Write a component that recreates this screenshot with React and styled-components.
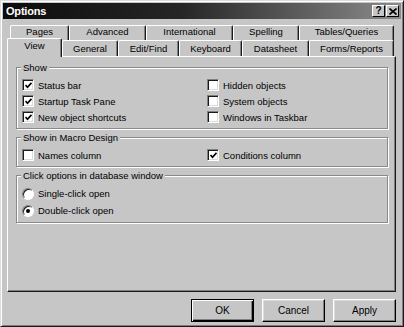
import React from 'react';
import styled, { createGlobalStyle } from 'styled-components';

const GlobalStyle = createGlobalStyle`
  html, body {
    margin: 0;
    padding: 0;
    background: #c6c6c6;
  }
  * {
    box-sizing: border-box;
  }
`;

const backTabs = [
  { label: 'Pages', width: 59 },
  { label: 'Advanced', width: 77 },
  { label: 'International', width: 87 },
  { label: 'Spelling', width: 66 },
  { label: 'Tables/Queries', width: 95 },
];

const frontTabs = [
  { label: 'View', width: 55, active: true },
  { label: 'General', width: 56 },
  { label: 'Edit/Find', width: 61 },
  { label: 'Keyboard', width: 63 },
  { label: 'Datasheet', width: 67 },
  { label: 'Forms/Reports', width: 85 },
];

const Check = () => (
  <svg width="7" height="7" viewBox="0 0 7 7">
    <path d="M0.5 3 L2.5 5.2 L6.5 0.8" stroke="#000" strokeWidth="1.7" fill="none" />
  </svg>
);

const CheckOption = ({ checked, children }) => (
  <Option>
    <Box>{checked && <Check />}</Box>
    <span>{children}</span>
  </Option>
);

const RadioOption = ({ checked, children }) => (
  <Option $tall>
    <Radio>{checked && <Dot />}</Radio>
    <span>{children}</span>
  </Option>
);

export default function App() {
  return (
    <>
      <GlobalStyle />
      <Window>
        <TitleBar>
          <Title>Options</Title>
          <TitleButtons>
            <TitleButton>?</TitleButton>
            <TitleButton>
              <svg width="8" height="7" viewBox="0 0 8 7">
                <path d="M0.5 0.5 L7.5 6.5 M7.5 0.5 L0.5 6.5" stroke="#000" strokeWidth="1.6" />
              </svg>
            </TitleButton>
          </TitleButtons>
        </TitleBar>

        <Body>
          <TabRow $offset={3}>
            {backTabs.map((t) => (
              <Tab key={t.label} $width={t.width} $back>{t.label}</Tab>
            ))}
          </TabRow>
          <FrontRow>
            {frontTabs.map((t) => (
              <Tab key={t.label} $width={t.width} $active={t.active}>{t.label}</Tab>
            ))}
          </FrontRow>

          <Panel>
            <Group>
              <Legend>Show</Legend>
              <Columns>
                <CheckOption checked>Status bar</CheckOption>
                <CheckOption>Hidden objects</CheckOption>
                <CheckOption checked>Startup Task Pane</CheckOption>
                <CheckOption>System objects</CheckOption>
                <CheckOption checked>New object shortcuts</CheckOption>
                <CheckOption>Windows in Taskbar</CheckOption>
              </Columns>
            </Group>

            <Group>
              <Legend>Show in Macro Design</Legend>
              <Columns>
                <CheckOption>Names column</CheckOption>
                <CheckOption checked>Conditions column</CheckOption>
              </Columns>
            </Group>

            <Group>
              <Legend>Click options in database window</Legend>
              <RadioOption>Single-click open</RadioOption>
              <RadioOption checked>Double-click open</RadioOption>
            </Group>
          </Panel>

          <ButtonBar>
            <Button $default>OK</Button>
            <Button>Cancel</Button>
            <Button>Apply</Button>
          </ButtonBar>
        </Body>
      </Window>
    </>
  );
}

// STYLES --------------------------------

const Window = styled.div`
  width: 404px;
  height: 327px;
  background: #c6c6c6;
  border: 1px solid;
  border-color: #dcdcdc #1a1a1a #1a1a1a #dcdcdc;
  box-shadow: inset 1px 1px 0 #fff, inset -1px -1px 0 #7e7e7e;
  padding: 2px;
  font-family: 'Liberation Sans', Arial, sans-serif;
  font-size: 9.5px;
  color: #000;
  display: flex;
  flex-direction: column;
`;

const TitleBar = styled.div`
  height: 16px;
  display: flex;
  align-items: center;
  justify-content: space-between;
  padding: 0 2px 0 3px;
  background: linear-gradient(90deg, #0c0c0c 0%, #262626 45%, #8c8c8c 100%);
`;

const Title = styled.span`
  color: #fff;
  font-weight: bold;
  font-size: 11px;
  letter-spacing: -0.2px;
`;

const TitleButtons = styled.div`
  display: flex;
  gap: 1px;
`;

const TitleButton = styled.div`
  width: 13px;
  height: 12px;
  background: #c6c6c6;
  border: 1px solid;
  border-color: #fff #000 #000 #fff;
  display: flex;
  align-items: center;
  justify-content: center;
  font-weight: bold;
  font-size: 10px;
  line-height: 1;
`;

const Body = styled.div`
  flex: 1;
  display: flex;
  flex-direction: column;
  padding: 6px 5px 0 4px;
`;

const TabRow = styled.div`
  display: flex;
  height: 15px;
  margin-left: ${(p) => p.$offset || 0}px;
`;

const FrontRow = styled.div`
  display: flex;
  align-items: flex-end;
  height: 18px;
  margin-top: -2px;
  position: relative;
  z-index: 2;
`;

const Tab = styled.div`
  width: ${(p) => p.$width}px;
  height: ${(p) => (p.$active ? 19 : 16)}px;
  margin-bottom: ${(p) => (p.$active ? -1 : 0)}px;
  background: #c6c6c6;
  border-top: 1px solid #fff;
  border-left: 1px solid #fff;
  border-right: 1px solid #1a1a1a;
  border-top-left-radius: 2px;
  border-top-right-radius: 2px;
  box-shadow: inset -1px 0 0 #808080;
  display: flex;
  justify-content: center;
  padding-top: ${(p) => (p.$back ? 0 : p.$active ? 1 : 2)}px;
  line-height: 11px;
  white-space: nowrap;
`;

const Panel = styled.div`
  height: 236px;
  background: #c6c6c6;
  border: 1px solid;
  border-color: #fff #1a1a1a #1a1a1a #fff;
  box-shadow: inset -1px -1px 0 #808080;
  padding: 5px 7px 0 8px;
  display: flex;
  flex-direction: column;
  gap: 3px;
  position: relative;
  z-index: 1;
`;

const Group = styled.fieldset`
  margin: 0;
  padding: 4px 0 3px 5px;
  border: 1px solid #8a8a8a;
  box-shadow: inset 1px 1px 0 #fff, 1px 1px 0 #fff;
  min-inline-size: 0;
`;

const Legend = styled.legend`
  padding: 0 2px;
  margin-left: -1px;
  line-height: 11px;
  background: #c6c6c6;
`;

const Columns = styled.div`
  display: grid;
  grid-template-columns: 185px 1fr;
`;

const Option = styled.div`
  display: flex;
  align-items: center;
  gap: 4px;
  height: ${(p) => (p.$tall ? 17 : 16)}px;
`;

const Box = styled.span`
  width: 12px;
  height: 12px;
  background: #fff;
  border: 1px solid;
  border-color: #808080 #fff #fff #808080;
  box-shadow: inset 1px 1px 0 #1a1a1a, inset -1px -1px 0 #dcdcdc;
  display: flex;
  align-items: center;
  justify-content: center;
  flex-shrink: 0;
`;

const Radio = styled.span`
  width: 12px;
  height: 12px;
  border-radius: 50%;
  background: #fff;
  border: 1px solid;
  border-color: #808080 #fff #fff #808080;
  box-shadow: inset 1px 1px 0 #1a1a1a;
  display: flex;
  align-items: center;
  justify-content: center;
  flex-shrink: 0;
`;

const Dot = styled.span`
  width: 4px;
  height: 4px;
  border-radius: 50%;
  background: #000;
`;

const ButtonBar = styled.div`
  display: flex;
  justify-content: flex-end;
  gap: 8px;
  margin-top: 7px;
`;

const Button = styled.div`
  width: 63px;
  height: 23px;
  display: flex;
  align-items: center;
  justify-content: center;
  background: #c6c6c6;
  border: 1px solid;
  border-color: ${(p) => (p.$default ? '#000' : '#fff #000 #000 #fff')};
  box-shadow: ${(p) =>
    p.$default
      ? 'inset 1px 1px 0 #fff, inset -1px -1px 0 #000, inset -2px -2px 0 #808080'
      : 'inset -1px -1px 0 #808080, inset 1px 1px 0 #dcdcdc'};
  font-size: 10px;
`;
